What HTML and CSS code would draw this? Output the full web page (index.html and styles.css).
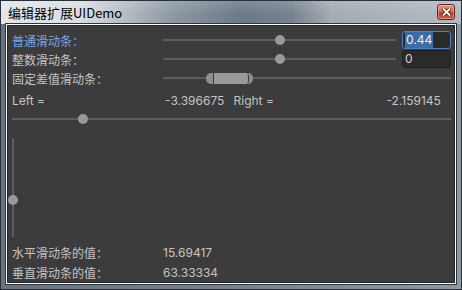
FILE: index.html
```html
<!DOCTYPE html>
<html lang="zh">
<head>
    <meta charset="UTF-8">
    <title>编辑器扩展UIDemo</title>
    <link rel="stylesheet" href="styles.css">
</head>
<body>
    <div class="window">
        <div class="titlebar">
            <span class="title">编辑器扩展UIDemo</span>
            <button class="close" aria-label="关闭">
                <svg width="9" height="8" viewBox="0 0 9 8">
                    <path d="M1.5 1 L7.5 7 M7.5 1 L1.5 7" stroke="#5a1a10" stroke-width="3.2" stroke-linecap="square"/>
                    <path d="M1.5 1 L7.5 7 M7.5 1 L1.5 7" stroke="#ffffff" stroke-width="1.8" stroke-linecap="square"/>
                </svg>
            </button>
        </div>

        <div class="client">
            <div class="row">
                <span class="label focused">普通滑动条：</span>
                <div class="slider">
                    <div class="track"></div>
                    <span class="thumb" style="left: 50%"></span>
                </div>
                <div class="field active"><span class="selection">0.44</span></div>
            </div>
            <div class="row">
                <span class="label">整数滑动条：</span>
                <div class="slider">
                    <div class="track"></div>
                    <span class="thumb" style="left: 50%"></span>
                </div>
                <div class="field">0</div>
            </div>
            <div class="row">
                <span class="label">固定差值滑动条：</span>
                <div class="slider">
                    <div class="track"></div>
                    <span class="range" style="left: 15%; width: 47px"></span>
                </div>
            </div>

            <div class="row pair-row">
                <div class="pair">
                    <span class="label">Left =</span>
                    <span class="value">-3.396675</span>
                </div>
                <div class="pair">
                    <span class="label">Right =</span>
                    <span class="value">-2.159145</span>
                </div>
            </div>

            <div class="row wide-row">
                <div class="slider">
                    <div class="track"></div>
                    <span class="thumb" style="left: 16.2%"></span>
                </div>
            </div>

            <div class="vslider">
                <div class="vtrack"></div>
                <span class="thumb" style="top: 62.6%"></span>
            </div>

            <div class="row result-row">
                <span class="label">水平滑动条的值：</span>
                <span class="value">15.69417</span>
            </div>
            <div class="row">
                <span class="label">垂直滑动条的值：</span>
                <span class="value">63.33334</span>
            </div>
        </div>
    </div>
</body>
</html>
```

FILE: styles.css
```css
:root {
    --panel-bg: #3c3c3c;
    --text-color: #c4c4c4;
    --focus-color: #7aa6e6;
    --track-color: #5d5d5d;
    --thumb-color: #999999;
    --field-bg: #2a2a2a;
}

* {
    margin: 0;
    padding: 0;
    box-sizing: border-box;
}

body {
    width: 462px;
    height: 290px;
    overflow: hidden;
    font-family: Inter, "Noto Sans CJK SC", sans-serif;
}

.window {
    width: 462px;
    height: 290px;
    border: 1px solid #28313a;
    padding: 0 5px 5px;
    display: flex;
    flex-direction: column;
    background: linear-gradient(to right, #68737e, #76818c 50%, #8d98a3);
}

.titlebar {
    height: 23px;
    margin: 0 -5px;
    padding: 0 6px 0 7px;
    display: flex;
    align-items: center;
    background:
        linear-gradient(to bottom, rgba(255,255,255,0.15), rgba(255,255,255,0) 60%),
        linear-gradient(to right, #e3e6e9 0, #d9dde1 80px, #8e99a4 170px, #6b7886 240px, #76828e 290px, #a3abb3 330px, #abb3bb 400px, #b3bac1 462px);
}

.title {
    font-family: "Noto Sans CJK SC", sans-serif;
    font-size: 13px;
    color: #000;
    flex: 1;
    margin-top: -1px;
}

.close {
    width: 18px;
    height: 16px;
    margin-top: -1px;
    border: 1px solid #5a2a22;
    border-radius: 3px;
    background: linear-gradient(to bottom, #e99a82 0, #d8664c 45%, #bf3a22 55%, #d05c40 100%);
    display: flex;
    align-items: center;
    justify-content: center;
    box-shadow: inset 0 0 0 1px rgba(255,255,255,0.35);
}

.client {
    flex: 1;
    border: 1px solid #ffffff;
    box-shadow: 0 0 0 1px #2c3640, inset 0 0 0 1px #262626;
    background: var(--panel-bg);
    padding: 6px 4px 0 5px;
    color: var(--text-color);
    font-size: 12px;
}

.row {
    height: 18px;
    display: flex;
    align-items: center;
    margin-bottom: 1px;
}

.label {
    width: 151px;
    flex-shrink: 0;
    white-space: nowrap;
}

.label.focused {
    color: var(--focus-color);
}

.slider {
    flex: 1;
    height: 18px;
    position: relative;
    display: flex;
    align-items: center;
}

.track {
    width: 100%;
    height: 2px;
    background: var(--track-color);
}

.thumb {
    position: absolute;
    top: 50%;
    width: 10px;
    height: 10px;
    margin: -5px 0 0 -5px;
    border-radius: 50%;
    background: var(--thumb-color);
}

.range {
    position: absolute;
    top: 50%;
    height: 11px;
    margin-top: -5px;
    border-radius: 5px;
    background: var(--thumb-color);
    border-left: 7px solid #8e8e8e;
    border-right: 4px solid #8e8e8e;
    box-shadow: inset 1px 0 0 #3a3a3a, inset -1px 0 0 #3a3a3a;
}

.field {
    width: 49px;
    height: 18px;
    margin-left: 6px;
    padding: 0 2px;
    border: 1px solid #212121;
    border-radius: 3px;
    background: var(--field-bg);
    color: #d2d2d2;
    line-height: 16px;
}

.field.active {
    border-color: #4a80c4;
    color: #f0f0f0;
}

.selection {
    display: inline-block;
    background: #3e6ca8;
    padding: 0 1px;
}

.pair-row {
    margin-top: 4px;
    gap: 4px;
}

.pair {
    flex: 1;
    display: flex;
}

.pair .value {
    flex: 1;
    padding-left: 2px;
}

.wide-row {
    margin-top: 1px;
}

.vslider {
    position: relative;
    width: 10px;
    height: 99px;
    margin: 10px 0 6px -4px;
    display: flex;
    justify-content: center;
}

.vtrack {
    width: 2px;
    height: 100%;
    background: var(--track-color);
}

.vslider .thumb {
    left: 50%;
}

.result-row {
    margin-bottom: 2px;
}
```
